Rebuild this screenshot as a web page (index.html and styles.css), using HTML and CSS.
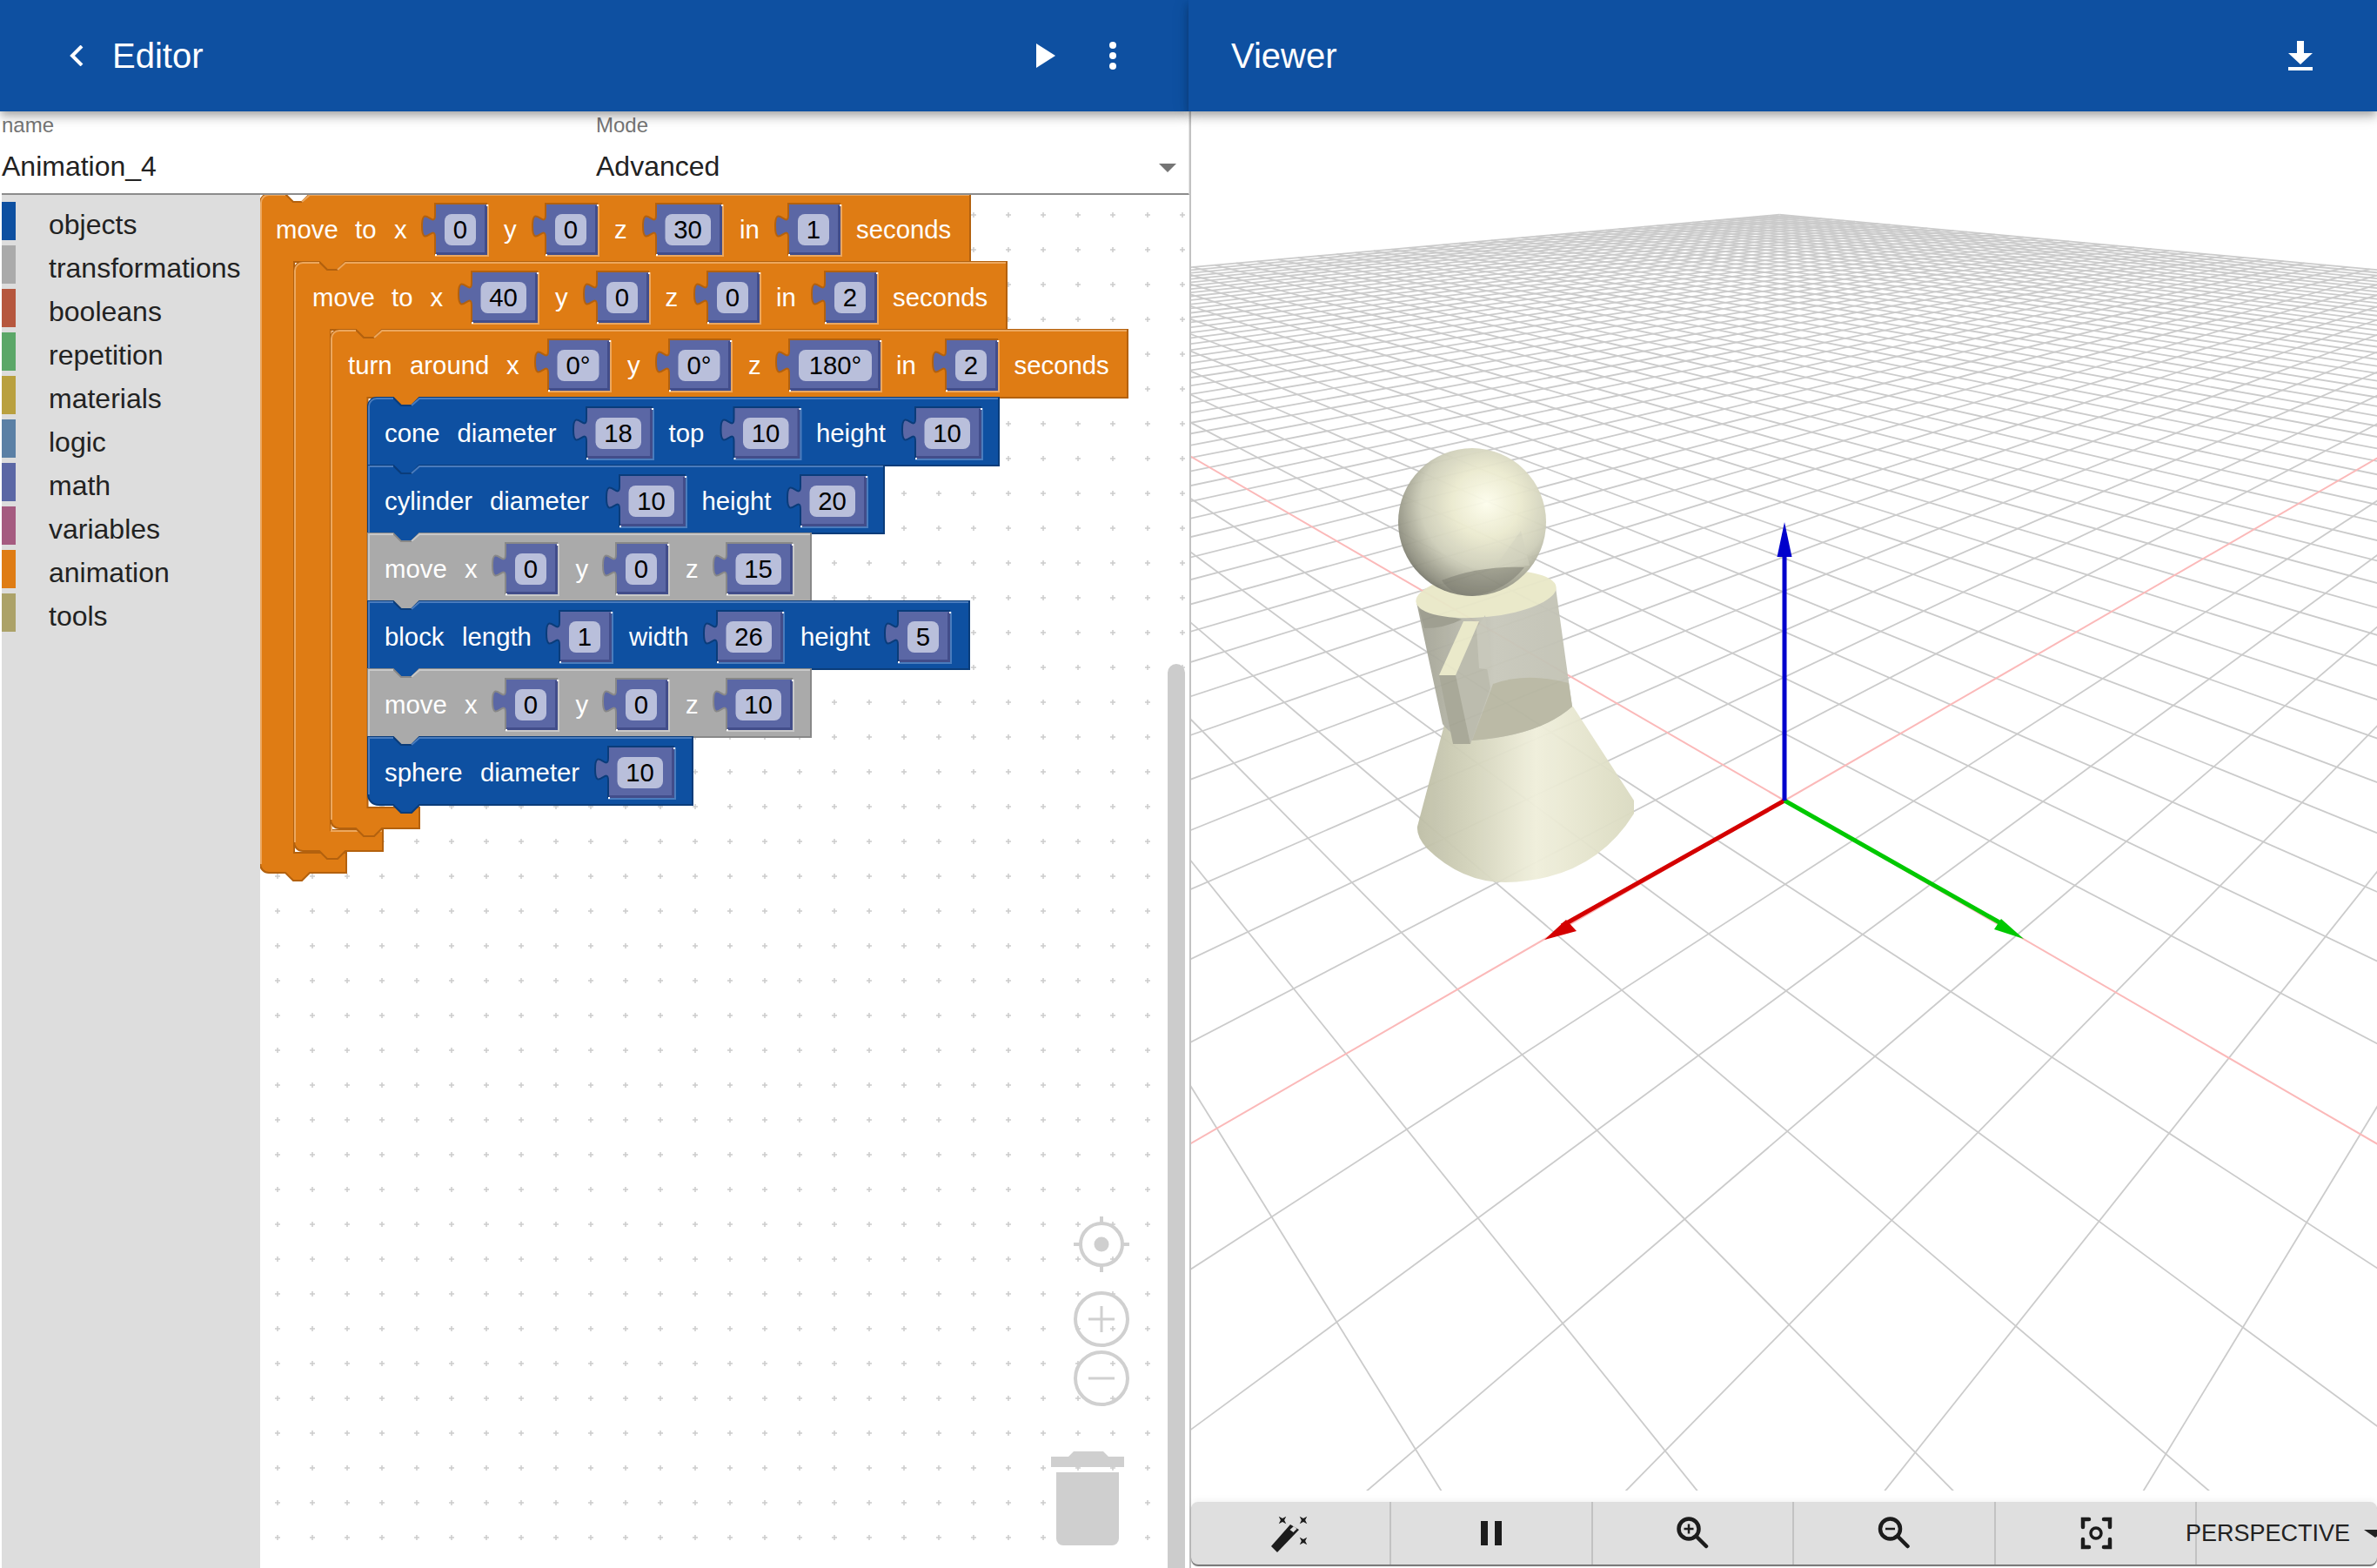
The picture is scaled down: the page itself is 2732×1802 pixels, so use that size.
FILE: index.html
```html
<!DOCTYPE html>
<html lang="en">
<head>
    <meta charset="UTF-8">
    <title>Animation_4 - Editor</title>
    <link rel="stylesheet" href="styles.css">
</head>
<body>
<div class="app">

    <!-- Editor -->
    <section class="editor">
        <header class="appbar">
            <svg class="icon-back" width="16" height="24" viewBox="0 0 16 24"><path d="M14 1 3 12l11 11"/></svg>
            <h1 class="appbar-title">Editor</h1>
            <span class="spacer"></span>
            <svg class="icon-play" width="22" height="28" viewBox="0 0 22 28"><path d="M0 0 22 14 0 28z"/></svg>
            <svg class="icon-more" width="8" height="32" viewBox="0 0 8 32"><circle cx="4" cy="4" r="4"/><circle cx="4" cy="16" r="4"/><circle cx="4" cy="28" r="4"/></svg>
        </header>

        <div class="form">
            <div class="field field-name">
                <label>name</label>
                <div class="field-value">Animation_4</div>
            </div>
            <div class="field field-mode">
                <label>Mode</label>
                <div class="field-value">Advanced</div>
                <span class="select-arrow"></span>
            </div>
        </div>

        <div class="workspace">
            <ul class="toolbox">
                <li><span class="swatch c-objects"></span>objects</li>
                <li><span class="swatch c-transformations"></span>transformations</li>
                <li><span class="swatch c-booleans"></span>booleans</li>
                <li><span class="swatch c-repetition"></span>repetition</li>
                <li><span class="swatch c-materials"></span>materials</li>
                <li><span class="swatch c-logic"></span>logic</li>
                <li><span class="swatch c-math"></span>math</li>
                <li><span class="swatch c-variables"></span>variables</li>
                <li><span class="swatch c-animation"></span>animation</li>
                <li><span class="swatch c-tools"></span>tools</li>
            </ul>

            <!-- viewBox uses page coordinates so blocks are easy to place -->
            <svg class="blocks" width="1067" height="1578" viewBox="299 224 1067 1578">
                <defs>
                    <pattern id="dots" x="299" y="227" width="40" height="40" patternUnits="userSpaceOnUse">
                        <path class="dot" d="M17 20h6M20 17v6"/>
                    </pattern>
                    <g id="s60">
                        <path class="sk-body" d="M0 0V12c0 17-15-14-15 13s15-4 15 13V58H60V0z"/>
                        <path class="sk-inner" d="M1 56.500H58.500V1"/>
                        <path class="sk-dk" d="M60 -1H0V12c0 17-15-14-15 13s15-4 15 13V58"/>
                        <path class="sk-lt" d="M61 0V59H0"/>
                        <path class="sk-dot" d="M59 0h2v2h-2zM0 57h2v2H0z"/>
                        <rect class="sk-field" x="11" y="11" width="36" height="36" rx="8"/>
                    </g>
                    <g id="s76">
                        <path class="sk-body" d="M0 0V12c0 17-15-14-15 13s15-4 15 13V58H76V0z"/>
                        <path class="sk-inner" d="M1 56.500H74.500V1"/>
                        <path class="sk-dk" d="M76 -1H0V12c0 17-15-14-15 13s15-4 15 13V58"/>
                        <path class="sk-lt" d="M77 0V59H0"/>
                        <path class="sk-dot" d="M75 0h2v2h-2zM0 57h2v2H0z"/>
                        <rect class="sk-field" x="10.500" y="11" width="52.500" height="36" rx="8"/>
                    </g>
                    <g id="s71">
                        <path class="sk-body" d="M0 0V12c0 17-15-14-15 13s15-4 15 13V58H71V0z"/>
                        <path class="sk-inner" d="M1 56.500H69.500V1"/>
                        <path class="sk-dk" d="M71 -1H0V12c0 17-15-14-15 13s15-4 15 13V58"/>
                        <path class="sk-lt" d="M72 0V59H0"/>
                        <path class="sk-dot" d="M70 0h2v2h-2zM0 57h2v2H0z"/>
                        <rect class="sk-field" x="10.500" y="11" width="48" height="36" rx="8"/>
                    </g>
                    <g id="s105">
                        <path class="sk-body" d="M0 0V12c0 17-15-14-15 13s15-4 15 13V58H105V0z"/>
                        <path class="sk-inner" d="M1 56.500H103.500V1"/>
                        <path class="sk-dk" d="M105 -1H0V12c0 17-15-14-15 13s15-4 15 13V58"/>
                        <path class="sk-lt" d="M106 0V59H0"/>
                        <path class="sk-dot" d="M104 0h2v2h-2zM0 57h2v2H0z"/>
                        <rect class="sk-field" x="11" y="11" width="84" height="36" rx="8"/>
                    </g>
                </defs>

                <rect x="299" y="224" width="1067" height="1578" fill="url(#dots)"/>

                <!-- move to 0 0 30 -->
                <g class="orange">
                    <path class="blk" d="M299 233a10 10 0 0 1 10-10H328L337 232H347L356 223H1115V301H398L389 310H376L367 301H338V980H398V1003H356L347 1012H337L328 1003H309a10 10 0 0 1-10-10z"/>
                    <path class="blk-lt" d="M300 993V233a9 9 0 0 1 9-9H328M347 232L356 224H1114"/>
                    <text class="lbl" x="317" y="272">move</text>
                    <text class="lbl" x="408" y="272">to</text>
                    <text class="lbl" x="453" y="272">x</text>
                    <use href="#s60" x="500" y="235"/><text class="num" x="529" y="273">0</text>
                    <text class="lbl" x="579" y="272">y</text>
                    <use href="#s60" x="627" y="235"/><text class="num" x="656" y="273">0</text>
                    <text class="lbl" x="706" y="272">z</text>
                    <use href="#s76" x="754" y="235"/><text class="num" x="790.500" y="273">30</text>
                    <text class="lbl" x="850" y="272">in</text>
                    <use href="#s60" x="906" y="235"/><text class="num" x="935" y="273">1</text>
                    <text class="lbl" x="984" y="272">seconds</text>
                </g>

                <!-- move to 40 0 0 -->
                <g class="orange">
                    <path class="blk" d="M338 311a10 10 0 0 1 10-10H367L376 310H388L397 301H1157V379H439L430 388H418L409 379H380V954H440V978H397L388 987H376L367 978H348a10 10 0 0 1-10-10z"/>
                    <path class="blk-lt" d="M339 968V311a9 9 0 0 1 9-9H367M388 310L397 302H1156M381 380V955H439"/>
                    <text class="lbl" x="359" y="350">move</text>
                    <text class="lbl" x="450" y="350">to</text>
                    <text class="lbl" x="494.500" y="350">x</text>
                    <use href="#s76" x="542" y="313"/><text class="num" x="578.500" y="351">40</text>
                    <text class="lbl" x="638" y="350">y</text>
                    <use href="#s60" x="686" y="313"/><text class="num" x="715" y="351">0</text>
                    <text class="lbl" x="764.500" y="350">z</text>
                    <use href="#s60" x="813" y="313"/><text class="num" x="842" y="351">0</text>
                    <text class="lbl" x="892" y="350">in</text>
                    <use href="#s60" x="948" y="313"/><text class="num" x="977" y="351">2</text>
                    <text class="lbl" x="1026" y="350">seconds</text>
                </g>

                <!-- turn around -->
                <g class="orange">
                    <path class="blk" d="M380 389a10 10 0 0 1 10-10H409L418 388H430L439 379H1296V457H482L473 466H461L452 457H422.500V928H482V952H439L430 961H418L409 952H390a10 10 0 0 1-10-10z"/>
                    <path class="blk-lt" d="M381 942V389a9 9 0 0 1 9-9H409M430 388L439 380H1295"/>
                    <text class="lbl" x="400" y="428">turn</text>
                    <text class="lbl" x="471" y="428">around</text>
                    <text class="lbl" x="582" y="428">x</text>
                    <use href="#s71" x="630" y="391"/><text class="num" x="664.500" y="429">0°</text>
                    <text class="lbl" x="721" y="428">y</text>
                    <use href="#s71" x="769" y="391"/><text class="num" x="803.500" y="429">0°</text>
                    <text class="lbl" x="860" y="428">z</text>
                    <use href="#s105" x="907" y="391"/><text class="num" x="960" y="429">180°</text>
                    <text class="lbl" x="1030" y="428">in</text>
                    <use href="#s60" x="1087" y="391"/><text class="num" x="1116" y="429">2</text>
                    <text class="lbl" x="1165.500" y="428">seconds</text>
                </g>

                <!-- cone -->
                <g class="blue">
                    <path class="blk" d="M423 467a10 10 0 0 1 10-10H452L461 466H473L482 457H1148V535H482L473 544H461L452 535H423z"/>
                    <path class="blk-lt" d="M424 534V467a9 9 0 0 1 9-9H452M473 466L482 458H1147"/>
                    <text class="lbl" x="442" y="506">cone</text>
                    <text class="lbl" x="525.500" y="506">diameter</text>
                    <use href="#s76" x="674" y="469"/><text class="num" x="710.500" y="507">18</text>
                    <text class="lbl" x="768.500" y="506">top</text>
                    <use href="#s76" x="843.500" y="469"/><text class="num" x="880" y="507">10</text>
                    <text class="lbl" x="938" y="506">height</text>
                    <use href="#s76" x="1052" y="469"/><text class="num" x="1088.500" y="507">10</text>
                </g>

                <!-- cylinder -->
                <g class="blue">
                    <path class="blk" d="M423 535H452L461 544H473L482 535H1016V613H482L473 622H461L452 613H423z"/>
                    <path class="blk-lt" d="M424 612V536H452M473 544L482 536H1015"/>
                    <text class="lbl" x="442" y="584">cylinder</text>
                    <text class="lbl" x="563" y="584">diameter</text>
                    <use href="#s76" x="712" y="547"/><text class="num" x="748.500" y="585">10</text>
                    <text class="lbl" x="806.500" y="584">height</text>
                    <use href="#s76" x="920" y="547"/><text class="num" x="956.500" y="585">20</text>
                </g>

                <!-- move -->
                <g class="grey">
                    <path class="blk" d="M423 613H452L461 622H473L482 613H932V691H482L473 700H461L452 691H423z"/>
                    <path class="blk-lt" d="M424 690V614H452M473 622L482 614H931"/>
                    <text class="lbl" x="442" y="662">move</text>
                    <text class="lbl" x="534" y="662">x</text>
                    <use href="#s60" x="581" y="625"/><text class="num" x="610" y="663">0</text>
                    <text class="lbl" x="661.500" y="662">y</text>
                    <use href="#s60" x="708" y="625"/><text class="num" x="737" y="663">0</text>
                    <text class="lbl" x="788" y="662">z</text>
                    <use href="#s76" x="835" y="625"/><text class="num" x="871.500" y="663">15</text>
                </g>

                <!-- block -->
                <g class="blue">
                    <path class="blk" d="M423 691H452L461 700H473L482 691H1114V769H482L473 778H461L452 769H423z"/>
                    <path class="blk-lt" d="M424 768V692H452M473 700L482 692H1113"/>
                    <text class="lbl" x="442" y="740">block</text>
                    <text class="lbl" x="531" y="740">length</text>
                    <use href="#s60" x="643" y="703"/><text class="num" x="672" y="741">1</text>
                    <text class="lbl" x="723" y="740">width</text>
                    <use href="#s76" x="824" y="703"/><text class="num" x="860.500" y="741">26</text>
                    <text class="lbl" x="920" y="740">height</text>
                    <use href="#s60" x="1032" y="703"/><text class="num" x="1061" y="741">5</text>
                </g>

                <!-- move -->
                <g class="grey">
                    <path class="blk" d="M423 769H452L461 778H473L482 769H932V847H482L473 856H461L452 847H423z"/>
                    <path class="blk-lt" d="M424 846V770H452M473 778L482 770H931"/>
                    <text class="lbl" x="442" y="818">move</text>
                    <text class="lbl" x="534" y="818">x</text>
                    <use href="#s60" x="581" y="781"/><text class="num" x="610" y="819">0</text>
                    <text class="lbl" x="661.500" y="818">y</text>
                    <use href="#s60" x="708" y="781"/><text class="num" x="737" y="819">0</text>
                    <text class="lbl" x="788" y="818">z</text>
                    <use href="#s76" x="835" y="781"/><text class="num" x="871.500" y="819">10</text>
                </g>

                <!-- sphere -->
                <g class="blue">
                    <path class="blk" d="M423 847H452L461 856H473L482 847H796V925H482L473 934H461L452 925H435a12 12 0 0 1-12-12z"/>
                    <path class="blk-lt" d="M424 913V848H452M473 856L482 848H795"/>
                    <text class="lbl" x="442" y="896">sphere</text>
                    <text class="lbl" x="552" y="896">diameter</text>
                    <use href="#s76" x="699" y="859"/><text class="num" x="735.500" y="897">10</text>
                </g>

                <!-- workspace controls -->
                <g class="ws-ctl">
                    <circle class="ctl-line" cx="1266" cy="1430" r="24"/>
                    <circle class="ctl-fill" cx="1266" cy="1430" r="8.500"/>
                    <path class="ctl-line" d="M1266 1398v8M1266 1454v8M1234 1430h8M1290 1430h8"/>
                    <circle class="ctl-line" cx="1266" cy="1516" r="30"/>
                    <path class="ctl-thin" d="M1251 1516h30M1266 1501v30"/>
                    <circle class="ctl-line" cx="1266" cy="1584" r="30"/>
                    <path class="ctl-thin" d="M1251 1584h30"/>
                    <path class="ctl-fill" d="M1208 1674H1228L1234 1668H1268L1274 1674H1292V1686H1208z"/>
                    <path class="ctl-fill" d="M1214 1692H1286V1768a8 8 0 0 1-8 8H1222a8 8 0 0 1-8-8z"/>
                </g>

                <path class="scroll-thumb" d="M1342 1802V773a10 10 0 0 1 20 0V1802z"/>
            </svg>
        </div>
    </section>

    <!-- Viewer -->
    <section class="viewer">
        <header class="appbar">
            <h1 class="appbar-title viewer-title">Viewer</h1>
            <span class="spacer"></span>
            <svg class="icon-download" width="28" height="34" viewBox="0 0 28 34"><path d="M10 0h8v14h10L14 27 0 14h10zM0 30h28v4H0z"/></svg>
        </header>

        <div class="stage">
            <svg class="scene" width="1363" height="1585" viewBox="1369 128 1363 1585">
                <defs>
                    <radialGradient id="sphere-shade" gradientUnits="userSpaceOnUse" cx="1708" cy="578" r="125">
                        <stop offset="0" stop-color="#fdfdec"/>
                        <stop offset=".3" stop-color="#ecebd0"/>
                        <stop offset=".6" stop-color="#cdcdb8"/>
                        <stop offset=".85" stop-color="#8d8d7e"/>
                        <stop offset="1" stop-color="#4f4f47"/>
                    </radialGradient>
                    <linearGradient id="cone-shade" gradientUnits="userSpaceOnUse" x1="1625" y1="0" x2="1880" y2="0">
                        <stop offset="0" stop-color="#bcbca4"/>
                        <stop offset=".25" stop-color="#d2d2ba"/>
                        <stop offset=".55" stop-color="#f0efdb"/>
                        <stop offset="1" stop-color="#dadac0"/>
                    </linearGradient>
                    <linearGradient id="cyl-shade" gradientUnits="userSpaceOnUse" x1="1628" y1="0" x2="1807" y2="0">
                        <stop offset="0" stop-color="#a2a294"/>
                        <stop offset=".5" stop-color="#c8c8bb"/>
                        <stop offset="1" stop-color="#c2c2b4"/>
                    </linearGradient>
                </defs>

                <!-- floor lines, filled in by viewer.js -->
                <g id="grid"></g>

                <g class="model">
                    <path fill="url(#cone-shade)" d="M1660 833L1629 950Q1628 962 1640 975Q1680 1014 1730 1014Q1830 1012 1878 935L1878 920L1808 812Q1730 800 1660 833z"/>
                    <path fill="url(#cyl-shade)" d="M1628 692L1658 832Q1670 848 1692 851Q1770 845 1807 812L1788 675Q1710 725 1628 692z"/>
                    <path fill="#9a9a8c" d="M1631 700L1637 722Q1660 722 1680 712z"/>
                    <path fill="#b8b7a2" d="M1692 851Q1770 845 1807 812L1803 785Q1755 772 1716 786z"/>
                    <ellipse fill="#e9e8c8" cx="1708" cy="683" rx="81" ry="26" transform="rotate(-6 1708 683)"/>
                    <path fill="#b9b9aa" d="M1700 714L1713 791L1690 855L1673 776z"/>
                    <path fill="#c6c6b8" d="M1697 722L1707 707L1715 770L1700 768z"/>
                    <path fill="#a5a594" d="M1654 776L1673 776L1690 855L1670 855z"/>
                    <path fill="#e9e8c8" d="M1682 714L1700 714L1673 776L1654 776z"/>
                    <ellipse fill="url(#sphere-shade)" cx="1692" cy="600" rx="85" ry="85"/>
                    <path fill="#77776a" fill-opacity=".55" d="M1657 667Q1700 650 1752 652Q1730 680 1692 685Q1668 684 1657 667z"/>
                    <path fill="#d0d0bc" fill-opacity=".5" d="M1718 652L1748 610L1758 650z"/>
                </g>

                <path class="axis-x" d="M2051 920L1795 1064"/>
                <path class="axis-x-head" d="M1775 1080L1800 1057L1812 1070z"/>
                <path class="axis-y" d="M2051 920L2305 1064"/>
                <path class="axis-y-head" d="M2326 1079L2300 1056L2292 1068z"/>
                <path class="axis-z" d="M2051 920V638"/>
                <path class="axis-z-head" d="M2051 600L2059.500 640H2042.500z"/>
            </svg>

            <div class="toolbar">
                <div class="tool">
                    <svg class="tool-icon" width="50" height="50" viewBox="1458 1737 50 50">
                        <path d="M1461 1777L1483 1752L1493 1758L1468 1784z"/>
                        <path class="wand-tip" d="M1482.500 1758L1487 1754L1490.500 1757L1486.500 1761z"/>
                        <path d="M1474 1741l1.500 4.500 4.500 1.500-4.500 1.500-1.500 4.500-1.500-4.500-4.500-1.500 4.500-1.500z" transform="rotate(45 1474 1747)"/>
                        <path d="M1498 1741l1.500 4.500 4.500 1.500-4.500 1.500-1.500 4.500-1.500-4.500-4.500-1.500 4.500-1.500z" transform="rotate(45 1498 1747)"/>
                        <path d="M1498 1765l1.500 4.500 4.500 1.500-4.500 1.500-1.500 4.500-1.500-4.500-4.500-1.500 4.500-1.500z" transform="rotate(45 1498 1771)"/>
                    </svg>
                </div>
                <div class="tool">
                    <svg class="tool-icon" width="50" height="50" viewBox="1689 1737 50 50"><path d="M1702 1748h8v28h-8zM1718 1748h8v28h-8z"/></svg>
                </div>
                <div class="tool">
                    <svg class="tool-icon tool-stroke" width="50" height="50" viewBox="1920 1737 50 50">
                        <circle cx="1941" cy="1757" r="11.500"/>
                        <path class="thin" d="M1935.500 1757h11M1941 1751.500v11"/>
                        <path d="M1951 1767l10 10"/>
                    </svg>
                </div>
                <div class="tool">
                    <svg class="tool-icon tool-stroke" width="50" height="50" viewBox="2151.500 1737 50 50">
                        <circle cx="2172" cy="1757" r="11.500"/>
                        <path class="thin" d="M2166.500 1757h11"/>
                        <path d="M2182 1767l10 10"/>
                    </svg>
                </div>
                <div class="tool">
                    <svg class="tool-icon tool-stroke" width="50" height="50" viewBox="2383 1737 50 50">
                        <path d="M2394 1755v-9h7M2418 1746h7v9M2425 1769v9h-7M2401 1778h-7v-9"/>
                        <circle class="thin3" cx="2409" cy="1762" r="6"/>
                    </svg>
                </div>
                <div class="camera-select">
                    <span>PERSPECTIVE</span>
                    <svg width="26" height="9" viewBox="0 0 26 9"><path d="M0 0h26L13 9z"/></svg>
                </div>
            </div>
        </div>
    </section>
</div>
<script src="viewer.js"></script>
</body>
</html>
```

FILE: styles.css
```css
* {
    box-sizing: border-box;
}
body {
    margin: 0;
    font-family: "Liberation Sans", Arial, sans-serif;
    background: white;
    overflow: hidden;
}
.app {
    display: flex;
    width: 2732px;
    height: 1802px;
    overflow: hidden;
}

/* Top bars */
.appbar {
    position: relative;
    z-index: 2;
    display: flex;
    align-items: center;
    flex: 0 0 128px;
    background-color: #0e50a1;
    color: white;
    box-shadow: 0 4px 8px -2px rgba(0, 0, 0, 0.2), 0 8px 10px rgba(0, 0, 0, 0.14), 0 2px 20px rgba(0, 0, 0, 0.12);
}
.appbar-title {
    margin: 0 0 0 33px;
    font-size: 40px;
    line-height: 40px;
    font-weight: normal;
}
.viewer-title {
    margin-left: 49px;
}
.spacer {
    flex: 1;
}
.icon-back {
    margin-left: 80px;
    fill: none;
    stroke: white;
    stroke-width: 4;
}
.icon-play {
    fill: white;
    margin-right: 62px;
}
.icon-more {
    fill: white;
    margin-right: 84px;
}
.icon-download {
    fill: white;
    margin-right: 74px;
}

/* Editor column */
.editor {
    display: flex;
    flex-direction: column;
    flex: 0 0 1367px;
    height: 100%;
}
.form {
    display: flex;
    flex: 0 0 96px;
    margin-left: 2px;
    border-bottom: 2px solid #8c8c8c;
    border-right: 1px solid #e6e6e6;
}
.field {
    position: relative;
    padding-top: 2px;
}
.field-name {
    flex: 0 0 683px;
}
.field-mode {
    flex: 1;
}
.field label {
    display: block;
    font-size: 24px;
    line-height: 28px;
    color: #757575;
}
.field-value {
    margin-top: 13px;
    font-size: 32px;
    line-height: 40px;
    color: #222;
}
.select-arrow {
    position: absolute;
    right: 14px;
    bottom: 24px;
    border-left: 10px solid transparent;
    border-right: 10px solid transparent;
    border-top: 10px solid #757575;
}
.workspace {
    display: flex;
    flex: 1;
    min-height: 0;
    margin-left: 2px;
}
.toolbox {
    flex: 0 0 297px;
    margin: 0;
    padding: 8px 0 0 0;
    list-style: none;
    background-color: #ddd;
}
.toolbox li {
    display: flex;
    height: 50px;
    font-size: 32px;
    line-height: 53px;
    color: #222;
}
.swatch {
    flex: 0 0 16px;
    height: 44px;
    margin-right: 38px;
}
.c-objects { background-color: #0e50a1; }
.c-transformations { background-color: #aaa; }
.c-booleans { background-color: #b6573e; }
.c-repetition { background-color: #5ba768; }
.c-materials { background-color: #b9a03f; }
.c-logic { background-color: #5b80a5; }
.c-math { background-color: #5b67a5; }
.c-variables { background-color: #a55b80; }
.c-animation { background-color: #df7c14; }
.c-tools { background-color: #aca268; }

/* Blockly style blocks */
.blocks {
    display: block;
    flex: 0 0 1067px;
}
.dot {
    stroke: #ccc;
    stroke-width: 1.5;
    fill: none;
}
.orange { --fill: #df7c14; --dk: #b3610e; --lt: #eca75e; }
.blue { --fill: #0e50a1; --dk: #0a3c7a; --lt: #4a7cbd; }
.grey { --fill: #aaa; --dk: #888; --lt: #c8c8c8; }
.blk {
    fill: var(--fill);
    stroke: var(--dk);
    stroke-width: 2;
}
.blk-lt {
    fill: none;
    stroke: var(--lt);
    stroke-width: 2;
}
.lbl {
    font-size: 29.33px;
    fill: white;
    transform: translateY(1.5px);
}
.num {
    font-size: 29.33px;
    fill: black;
    text-anchor: middle;
    transform: translateY(1px);
}
.sk-body {
    fill: #5b67a5;
}
.sk-inner {
    fill: none;
    stroke: #424d8a;
    stroke-width: 3;
}
.sk-dk {
    fill: none;
    stroke: var(--dk);
    stroke-width: 2;
}
.sk-lt {
    fill: none;
    stroke: var(--lt);
    stroke-width: 2;
}
.sk-dot {
    fill: white;
}
.sk-field {
    fill: #b9bfdb;
}
.ctl-line {
    fill: none;
    stroke: #d0d0d0;
    stroke-width: 4;
}
.ctl-thin {
    fill: none;
    stroke: #d0d0d0;
    stroke-width: 3;
}
.ctl-fill {
    fill: #cfcfcf;
}
.scroll-thumb {
    fill: #ccc;
}

/* Viewer column */
.viewer {
    display: flex;
    flex-direction: column;
    flex: 1;
    min-width: 0;
    height: 100%;
    margin-left: -1px;
}
.stage {
    display: flex;
    flex-direction: column;
    flex: 1;
    min-height: 0;
    min-width: 0;
    margin-left: 1px;
    border-left: 2px solid #c2c2c2;
}
.scene {
    display: block;
    flex: 0 0 1585px;
}
.grid-line {
    stroke: #cbcbcb;
    stroke-width: 1.8;
}
.grid-axis {
    stroke: #fbb9b9;
    stroke-width: 2;
}
.model {
    opacity: 0.95;
}
.axis-x, .axis-y, .axis-z {
    fill: none;
    stroke-width: 5;
}
.axis-x { stroke: #d40000; }
.axis-y { stroke: #00c800; }
.axis-z { stroke: #0000cc; }
.axis-x-head { fill: #d40000; }
.axis-y-head { fill: #00c800; }
.axis-z-head { fill: #0000cc; }

.toolbar {
    display: flex;
    align-items: center;
    flex: 0 0 72px;
    margin-top: 13px;
    background-color: #dfdfdf;
    border-radius: 8px;
    box-shadow: 0 2px 1px rgba(0, 0, 0, 0.55), 0 -2px 8px rgba(0, 0, 0, 0.05);
    overflow: hidden;
}
.tool {
    display: flex;
    justify-content: center;
    align-items: center;
    flex: none;
    width: 231.5px;
    height: 100%;
    border-right: 2px solid #c2c2c2;
}
.tool:first-child {
    width: 230px;
}
.tool-icon {
    fill: #1c1c1c;
}
.wand-tip {
    fill: #dfdfdf;
}
.tool-stroke {
    fill: none;
    stroke: #1c1c1c;
    stroke-width: 4.500;
    stroke-linecap: round;
}
.tool-stroke .thin {
    stroke-width: 2.500;
    stroke-linecap: butt;
}
.tool-stroke .thin3 {
    stroke-width: 3.500;
}
.camera-select {
    display: flex;
    align-items: center;
    flex: none;
    margin-left: -13px;
    font-size: 27px;
    color: #222;
}
.camera-select span {
    margin-right: 16px;
}
.camera-select svg {
    fill: #222;
}
```

FILE: viewer.js
```js
// Floor grid of the 3D view: 100 x 100 cells seen in perspective
var origin = [2051, 920];
var vanishRight = [3431, 123];
var vanishLeft = [670, 120];
var stepU = 0.0535;
var stepV = 0.054;
var half = 50;
var nearLimit = 0.05;

function project(u, v) {
    var a = u * stepU;
    var b = v * stepV;
    var d = 1 + a + b;
    return [
        (origin[0] + a * vanishRight[0] + b * vanishLeft[0]) / d,
        (origin[1] + a * vanishRight[1] + b * vanishLeft[1]) / d
    ];
}

function addLine(parent, from, to, cls) {
    var line = document.createElementNS("http://www.w3.org/2000/svg", "line");
    line.setAttribute("x1", from[0]);
    line.setAttribute("y1", from[1]);
    line.setAttribute("x2", to[0]);
    line.setAttribute("y2", to[1]);
    line.setAttribute("class", cls);
    parent.appendChild(line);
}

var grid = document.getElementById("grid");
var axisLines = [];

for (var i = -half; i <= half; i++) {
    // keep only the part in front of the camera
    var minV = Math.max(-half, (nearLimit - 1 - i * stepU) / stepV);
    var minU = Math.max(-half, (nearLimit - 1 - i * stepV) / stepU);

    if (i === 0) {
        axisLines.push([project(0, minV), project(0, half)]);
        axisLines.push([project(minU, 0), project(half, 0)]);
        continue;
    }
    if (minV < half) {
        addLine(grid, project(i, minV), project(i, half), "grid-line");
    }
    if (minU < half) {
        addLine(grid, project(minU, i), project(half, i), "grid-line");
    }
}

axisLines.forEach(function (l) {
    addLine(grid, l[0], l[1], "grid-axis");
});
```
